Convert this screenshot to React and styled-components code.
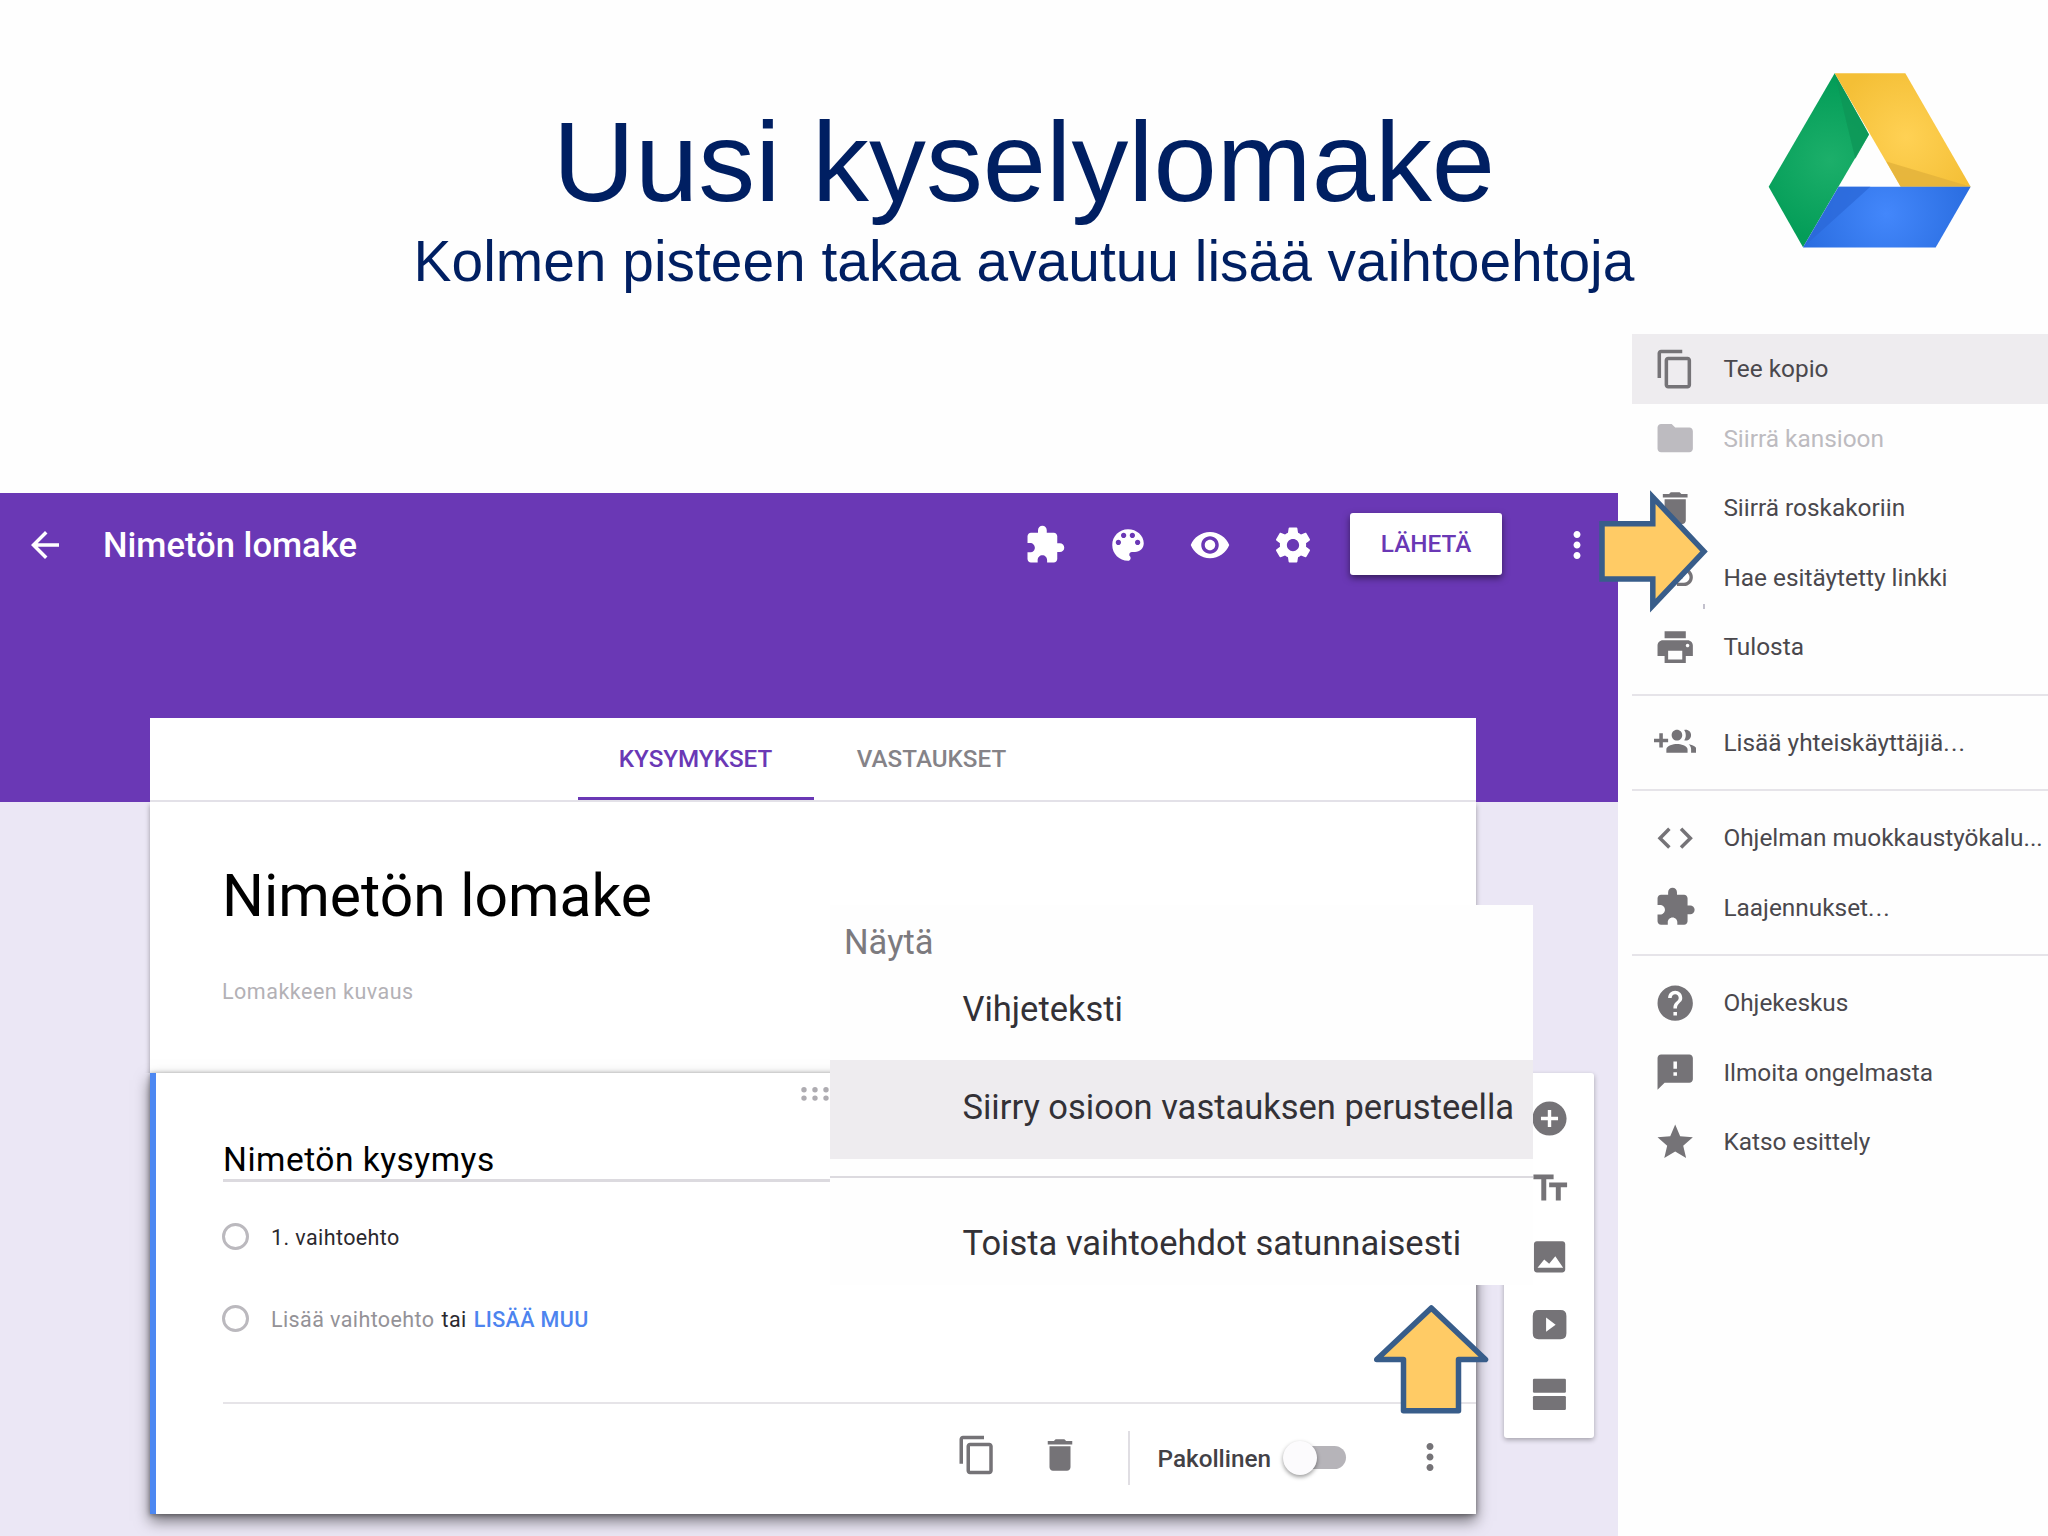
// Imports
import React from "react";
import styled, { createGlobalStyle, css } from "styled-components";
import {
	MdArrowBack,
	MdExtension,
	MdVisibility,
	MdMoreVert,
	MdContentCopy,
	MdFolder,
	MdDelete,
	MdLink,
	MdPrint,
	MdCode,
	MdHelp,
	MdFeedback,
	MdStar,
	MdAddCircle
} from "react-icons/md";

// Icons
const Glyph = ({ d, children }) => (
	<svg viewBox="0 0 24 24" width="1em" height="1em" fill="currentColor">
		{ d && <path d={ d } /> }
		{ children }
	</svg>
);

const PaletteIcon = () => (
	<Glyph d="M12 3c-4.97 0-9 4.03-9 9s4.03 9 9 9c.83 0 1.5-.67 1.5-1.5 0-.39-.15-.74-.39-1.01-.23-.26-.38-.61-.38-.99 0-.83.67-1.5 1.5-1.5H16c2.76 0 5-2.24 5-5 0-4.42-4.03-8-9-8zm-5.5 9c-.83 0-1.5-.67-1.5-1.5S5.67 9 6.5 9 8 9.67 8 10.5 7.33 12 6.5 12zm3-4C8.67 8 8 7.33 8 6.5S8.67 5 9.5 5s1.5.67 1.5 1.5S10.33 8 9.5 8zm5 0c-.83 0-1.5-.67-1.5-1.5S13.67 5 14.5 5s1.5.67 1.5 1.5S15.33 8 14.5 8zm3 4c-.83 0-1.5-.67-1.5-1.5S16.67 9 17.5 9s1.5.67 1.5 1.5-.67 1.5-1.5 1.5z" />
);

const SettingsIcon = () => (
	<Glyph d="M19.43 12.98c.04-.32.07-.64.07-.98s-.03-.66-.07-.98l2.11-1.65c.19-.15.24-.42.12-.64l-2-3.46c-.12-.22-.39-.3-.61-.22l-2.49 1c-.52-.4-1.08-.73-1.69-.98l-.38-2.65C14.46 2.18 14.25 2 14 2h-4c-.25 0-.46.18-.49.42l-.38 2.65c-.61.25-1.17.59-1.69.98l-2.49-1c-.23-.09-.49 0-.61.22l-2 3.46c-.13.22-.07.49.12.64l2.11 1.65c-.04.32-.07.65-.07.98s.03.66.07.98l-2.11 1.65c-.19.15-.24.42-.12.64l2 3.46c.12.22.39.3.61.22l2.49-1c.52.4 1.08.73 1.69.98l.38 2.65c.03.24.24.42.49.42h4c.25 0 .46-.18.49-.42l.38-2.65c.61-.25 1.17-.59 1.69-.98l2.49 1c.23.09.49 0 .61-.22l2-3.46c.12-.22.07-.49-.12-.64l-2.11-1.65zM12 15.5c-1.93 0-3.5-1.57-3.5-3.5s1.57-3.5 3.5-3.5 3.5 1.57 3.5 3.5-1.57 3.5-3.5 3.5z" />
);

const GroupAddIcon = () => (
	<Glyph d="M8 10H5V7H3v3H0v2h3v3h2v-3h3v-2zm10 1c1.66 0 2.99-1.34 2.99-3S19.66 5 18 5c-.32 0-.63.05-.91.14.57.81.9 1.79.9 2.86s-.34 2.04-.9 2.86c.28.09.59.14.91.14zm-5 0c1.66 0 2.99-1.34 2.99-3S14.66 5 13 5c-1.66 0-3 1.34-3 3s1.34 3 3 3zm6.62 2.16c.83.73 1.38 1.66 1.38 2.84v2h3v-2c0-1.54-2.37-2.49-4.38-2.84zM13 13c-2 0-6 1-6 3v2h12v-2c0-2-4-3-6-3z" />
);

// Two bars with stems, big and small
const TitleIcon = () => (
	<Glyph d="M2.6 4.4h11.8v2.7h-4.3v12.5H7.2V7.1H2.6zM11.8 9.1h10.5v2.7h-3.7v7.8h-2.9v-7.8h-3.9z" />
);

const PictureIcon = () => (
	<Glyph>
		<path
			fillRule="evenodd"
			d="M4.6 3h14.9c1 0 1.7.8 1.7 1.7v14.9c0 1-.8 1.7-1.7 1.7H4.6c-1 0-1.7-.8-1.7-1.7V4.7c0-1 .8-1.7 1.7-1.7zM5 18.6h15l-4.6-6.8-3.6 4.4-2.9-2.4z"
		/>
	</Glyph>
);

const VideoIcon = () => (
	<Glyph>
		<path
			fillRule="evenodd"
			d="M5.6 2.9h12.9q3.4 0 3.4 3.5v10.2q0 3.5-3.400 3.5H5.6q-3.4 0-3.4-3.5V6.4q0-3.5 3.4-3.5zM10 7.3v8.4l5.6-4.2z"
		/>
	</Glyph>
);

const SectionIcon = () => (
	<Glyph>
		<rect x="2.3" y="2.8" width="19.3" height="8.2" rx=".7" />
		<rect x="2.3" y="12.9" width="19.3" height="8.2" rx=".7" />
	</Glyph>
);

const DriveLogo = () => (
	<svg viewBox="85 65 612 530" width="204" height="177">
		<defs>
			<radialGradient id="green" gradientUnits="userSpaceOnUse" cx="270" cy="330" r="240">
				<stop offset="0" stopColor="#1caf6a" />
				<stop offset="1" stopColor="#049d58" />
			</radialGradient>
			<radialGradient id="yellow" gradientUnits="userSpaceOnUse" cx="500" cy="260" r="230">
				<stop offset="0" stopColor="#ffd154" />
				<stop offset="1" stopColor="#f4bf36" />
			</radialGradient>
			<radialGradient id="blue" gradientUnits="userSpaceOnUse" cx="440" cy="490" r="260">
				<stop offset="0" stopColor="#4387fb" />
				<stop offset="1" stopColor="#2a6de0" />
			</radialGradient>
		</defs>
		<polygon points="285,68 388,252 190,590 87,409" fill="url(#green)" />
		<polygon points="285,68 388,252 347,325" fill="#0e9657" fillOpacity=".75" />
		<polygon points="285,68 497,68 693,409 483,409" fill="url(#yellow)" />
		<polygon points="440,333 693,409 483,409" fill="#e2b23b" fillOpacity=".8" />
		<polygon points="297,409 693,409 588,591 190,591" fill="url(#blue)" />
		<polygon points="297,409 392,409 190,591" fill="#2b68d8" fillOpacity=".75" />
	</svg>
);

// Data
const menuGroups = [
	[
		{ label: "Tee kopio", icon: <MdContentCopy />, active: true },
		{ label: "Siirrä kansioon", icon: <MdFolder />, disabled: true },
		{ label: "Siirrä roskakoriin", icon: <MdDelete /> },
		{ label: "Hae esitäytetty linkki", icon: <MdLink /> },
		{ label: "Tulosta", icon: <MdPrint /> }
	],
	[
		{ label: "Lisää yhteiskäyttäjiä", icon: <GroupAddIcon />, more: true }
	],
	[
		{ label: "Ohjelman muokkaustyökalu...", icon: <MdCode /> },
		{ label: "Laajennukset", icon: <MdExtension />, more: true }
	],
	[
		{ label: "Ohjekeskus", icon: <MdHelp /> },
		{ label: "Ilmoita ongelmasta", icon: <MdFeedback /> },
		{ label: "Katso esittely", icon: <MdStar /> }
	]
];

// Component
const App = () => {

	// Return
	return(
		<Slide>
			<GlobalStyle />
			<SlideHeader>
				<Heading>
					<h1>Uusi kyselylomake</h1>
					<h2>Kolmen pisteen takaa avautuu lisää vaihtoehtoja</h2>
				</Heading>
				<LogoBox><DriveLogo /></LogoBox>
			</SlideHeader>
			<SlideBody>
				<Editor>
					<TopBar>
						<MdArrowBack />
						<FormName>Nimetön lomake</FormName>
						<TopActions>
							<MdExtension />
							<PaletteIcon />
							<MdVisibility />
							<SettingsIcon />
						</TopActions>
						<SendButton>LÄHETÄ</SendButton>
						<MdMoreVert />
					</TopBar>
					<Workspace>
						<Form>
							<Tabs>
								<Tab $active>KYSYMYKSET</Tab>
								<Tab>VASTAUKSET</Tab>
							</Tabs>
							<TitleCard>
								<h3>Nimetön lomake</h3>
								<p>Lomakkeen kuvaus</p>
							</TitleCard>
							<QuestionCard>
								<DragHandle viewBox="0 0 28 16">
									{ [3, 14, 25].map(x => [3.7, 12.1].map(y => (
										<circle key={ `${x}-${y}` } cx={ x } cy={ y } r="2.7" />
									))) }
								</DragHandle>
								<Question>Nimetön kysymys</Question>
								<Option>
									<Radio />
									<span>1. vaihtoehto</span>
								</Option>
								<Option $muted>
									<Radio />
									<span>Lisää vaihtoehto</span>
									<em>tai</em>
									<strong>LISÄÄ MUU</strong>
								</Option>
								<QuestionFooter>
									<MdContentCopy />
									<MdDelete />
									<FooterDivider />
									<RequiredLabel>Pakollinen</RequiredLabel>
									<Toggle />
									<MdMoreVert />
								</QuestionFooter>
							</QuestionCard>
						</Form>
						<SideTools>
							<MdAddCircle />
							<TitleIcon />
							<PictureIcon />
							<VideoIcon />
							<SectionIcon />
						</SideTools>
					</Workspace>
				</Editor>
				<Menu>
					{ menuGroups.map((group, index) => (
						<MenuGroup key={ index }>
							{ group.map(item => (
								<MenuItem key={ item.label } $active={ item.active } $disabled={ item.disabled }>
									{ item.icon }
									<span>
										{ item.label }
										{ item.more && <Ellipsis>...</Ellipsis> }
									</span>
								</MenuItem>
							)) }
						</MenuGroup>
					)) }
				</Menu>
			</SlideBody>
			<Popup>
				<PopupCaption>Näytä</PopupCaption>
				<PopupItem>Vihjeteksti</PopupItem>
				<PopupItem $active>Siirry osioon vastauksen perusteella</PopupItem>
				<PopupItem $last>Toista vaihtoehdot satunnaisesti</PopupItem>
			</Popup>
			<RightArrow viewBox="0 0 120 130">
				<path d="M8 36.7H58.8V10.2L110 64.4L58.8 118.6V92H8z" />
			</RightArrow>
			<Tick />
			<UpArrow viewBox="0 0 124 118">
				<path d="M61.3 8L115.5 59.5H88.5V110.8H33.5V59.5H6.7z" />
			</UpArrow>
		</Slide>
	);

};

// Styled
const GlobalStyle = createGlobalStyle`
	body{
		margin: 0;
		background-color: #fefefe;
	}
	*{
		box-sizing: border-box;
	}
	h1, h2, h3, p{
		margin: 0;
		font-weight: normal;
	}
	svg{
		display: block;
		flex-shrink: 0;
	}
`;

const Slide = styled.div`
	position: relative;
	width: 2048px;
	height: 1536px;
	overflow: hidden;
	background-color: #fefefe;
	font-family: Roboto, "Liberation Sans", sans-serif;
	white-space: nowrap;
`;

const SlideHeader = styled.header`
	display: grid;
	grid-template-columns: 1fr auto 1fr;
	height: 334px;
`;

const Heading = styled.div`
	grid-column: 2;
	padding-top: 97px;
	text-align: center;
	color: #001f62;
	font-family: "Liberation Sans", Arial, sans-serif;
	h1{
		font-size: 113.8px;
		line-height: 130px;
	}
	h2{
		font-size: 56.9px;
		line-height: 69px;
	}
`;

const LogoBox = styled.div`
	justify-self: end;
	padding: 72px 76px 0 0;
`;

const SlideBody = styled.div`
	display: flex;
	align-items: flex-start;
`;

const Editor = styled.main`
	width: 1617.5px;
	height: 1043px;
	margin-top: 159px;
	background: linear-gradient(#6a38b5 309px, #ebe7f5 309px);
`;

const TopBar = styled.div`
	display: flex;
	align-items: center;
	height: 104px;
	padding-left: 24px;
	color: white;
	font-size: 42px;
`;

const FormName = styled.div`
	width: 919px;
	margin-left: 37px;
	font-size: 34.6px;
	font-weight: 500;
`;

const TopActions = styled.div`
	display: flex;
	gap: 40.7px;
	margin-left: 2px;
`;

const SendButton = styled.button`
	width: 152px;
	height: 62px;
	margin: -3px 54px 0 36px;
	padding: 0;
	border: none;
	border-radius: 3px;
	background-color: white;
	box-shadow: 0 3px 7px rgba(0, 0, 0, 0.5);
	color: #6a38b5;
	font: 500 24.3px Roboto, sans-serif;
`;

const Workspace = styled.div`
	display: flex;
	align-items: flex-start;
	padding: 121px 0 0 150px;
`;

const Form = styled.section`
	width: 1326px;
	background-color: white;
`;

const Tabs = styled.nav`
	display: flex;
	justify-content: center;
	height: 84px;
	padding-left: 1px;
	border-bottom: 2px solid #e3e1e8;
`;

const Tab = styled.div`
	width: 236px;
	padding-top: 1px;
	border-bottom: 3px solid ${({ $active }) => $active ? "#6a38b5" : "transparent"};
	color: ${({ $active }) => $active ? "#6a38b5" : "#858388"};
	font-size: 24.2px;
	font-weight: 500;
	line-height: 80px;
	text-align: center;
`;

const TitleCard = styled.div`
	height: 271px;
	padding: 59px 0 0 72px;
	box-shadow: 0 3px 5px rgba(0, 0, 0, 0.35);
	clip-path: inset(0 -8px 0 -8px);
	h3{
		font-size: 58.8px;
		line-height: 70px;
	}
	p{
		margin-top: 46px;
		color: #b3b1b6;
		font-size: 21.5px;
		line-height: 30px;
		letter-spacing: 0.5px;
	}
`;

const QuestionCard = styled.div`
	position: relative;
	height: 440.5px;
	padding-left: 67px;
	border-left: 6px solid #4d88f2;
	background-color: white;
	box-shadow: 0 7px 14px rgba(0, 0, 0, 0.5), 0 1px 5px rgba(0, 0, 0, 0.4);
`;

const DragHandle = styled.svg`
	width: 28px;
	height: 16px;
	margin-left: 577.5px;
	transform: translateY(13px);
	fill: #aeacb1;
`;

const Question = styled.div`
	margin-top: 50px;
	padding-top: 1px;
	border-bottom: 3px solid #dcdadf;
	font-size: 33.5px;
	line-height: 39px;
	letter-spacing: 0.5px;
`;

const Option = styled.div`
	display: flex;
	align-items: center;
	height: 82px;
	margin-left: -1px;
	padding-top: 1px;
	font-size: 21.5px;
	letter-spacing: 0.4px;
	color: #2b292e;
	&:nth-of-type(2){
		margin-top: 14px;
	}
	span{
		margin-left: 22px;
		${({ $muted }) => $muted && css`
			color: #949297;
		`}
	}
	em{
		margin-left: 7px;
		font-style: normal;
	}
	strong{
		margin-left: 7px;
		color: #4d84ef;
		font-weight: 500;
	}
`;

const Radio = styled.i`
	width: 27px;
	height: 27px;
	margin-top: -2px;
	border: 3px solid #bbb9be;
	border-radius: 50%;
`;

const QuestionFooter = styled.div`
	display: flex;
	align-items: center;
	height: 108px;
	margin-top: 42px;
	padding-left: 733px;
	border-top: 2px solid #e6e4e8;
	color: #757377;
	font-size: 42px;
	svg{
		margin-top: -4px;
	}
	svg + svg{
		margin-left: 40.5px;
	}
	svg:last-child{
		margin: 0 0 0 63px;
	}
`;

const FooterDivider = styled.i`
	width: 2px;
	height: 54px;
	margin: 2px 0 0 47px;
	background-color: #e0dee3;
`;

const RequiredLabel = styled.span`
	width: 125.5px;
	margin: 2px 0 0 28px;
	color: #434146;
	font-size: 24.3px;
	font-weight: 500;
`;

const Toggle = styled.i`
	display: flex;
	align-items: center;
	width: 63px;
	height: 34px;
	margin-top: 1px;
	&::before{
		content: "";
		width: 34px;
		height: 34px;
		border-radius: 50%;
		background-color: #fcfbfd;
		box-shadow: 0 2px 4px rgba(0, 0, 0, 0.4);
		z-index: 1;
	}
	&::after{
		content: "";
		width: 47px;
		height: 23px;
		margin-left: -18px;
		border-radius: 12px;
		background-color: #b6b4b9;
	}
`;

const SideTools = styled.aside`
	display: flex;
	flex-direction: column;
	align-items: center;
	gap: 28px;
	width: 90px;
	height: 365px;
	margin: 355px 0 0 28px;
	padding-top: 25px;
	border-radius: 3px;
	background-color: white;
	box-shadow: 0 2px 5px rgba(0, 0, 0, 0.3);
	color: #757377;
	font-size: 41px;
`;

const Menu = styled.aside`
	flex: 1;
	margin-left: 14.7px;
`;

const MenuGroup = styled.div`
	& + &{
		margin-top: 12px;
		padding-top: 12px;
		border-top: 2px solid #e6e4e9;
	}
`;

const MenuItem = styled.div`
	display: flex;
	align-items: center;
	gap: 27px;
	height: 69.5px;
	padding-left: 21.8px;
	background-color: ${({ $active }) => $active ? "#eeecef" : "transparent"};
	color: ${({ $disabled }) => $disabled ? "#bdbbc0" : "#4a484d"};
	font-size: 24.4px;
	svg{
		width: 42.4px;
		height: 42.4px;
		color: ${({ $disabled }) => $disabled ? "#bdbbc0" : "#757377"};
	}
`;

const Ellipsis = styled.span`
	letter-spacing: 1.2px;
`;

// Popup lies over the form
const Popup = styled.div`
	position: absolute;
	left: 830px;
	top: 904.5px;
	width: 703px;
	height: 380.5px;
	padding-top: 14px;
	background-color: #fefefe;
	color: #333136;
	font-size: 34.5px;
`;

const PopupCaption = styled.div`
	padding-left: 14px;
	color: #7c7a7e;
	line-height: 46px;
`;

const PopupItem = styled.div`
	margin-bottom: 7px;
	padding-left: 132.5px;
	line-height: 88px;
	${({ $active }) => $active && css`
		height: 99px;
		padding-top: 3px;
		background-color: #eeecef;
	`}
	${({ $last }) => $last && css`
		margin-top: 17px;
		padding-top: 21px;
		border-top: 2px solid #dcdadf;
	`}
`;

const Arrow = styled.svg`
	position: absolute;
	fill: #ffcb65;
	stroke: #385d8a;
	stroke-width: 5.5px;
`;

const RightArrow = styled(Arrow)`
	left: 1594px;
	top: 487px;
	width: 120px;
	height: 130px;
`;

const UpArrow = styled(Arrow)`
	left: 1370px;
	top: 1300px;
	width: 124px;
	height: 118px;
	stroke-linejoin: round;
`;

const Tick = styled.i`
	position: absolute;
	left: 1703px;
	top: 604px;
	width: 2px;
	height: 5px;
	background-color: #c3c1cd;
`;

// Export
export default App;
